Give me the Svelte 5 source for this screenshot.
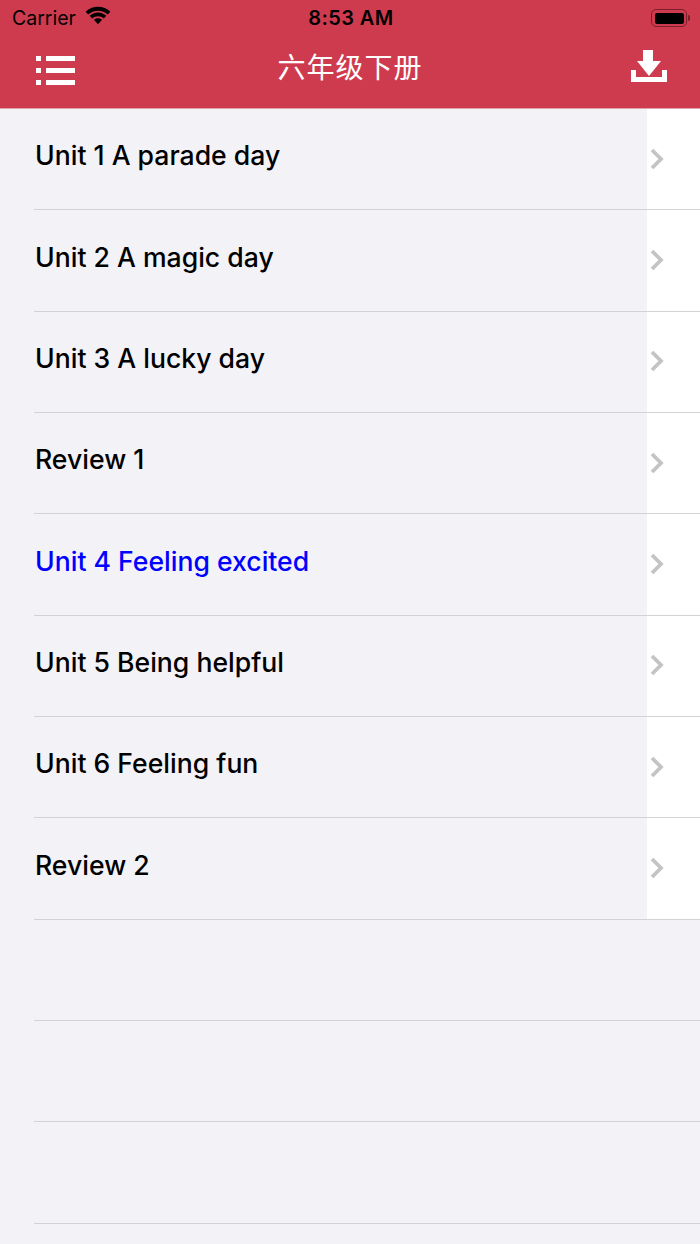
<script>
	const units = [
		{ title: 'Unit 1 A parade day' },
		{ title: 'Unit 2 A magic day' },
		{ title: 'Unit 3 A lucky day' },
		{ title: 'Review 1' },
		{ title: 'Unit 4 Feeling excited', current: true },
		{ title: 'Unit 5 Being helpful' },
		{ title: 'Unit 6 Feeling fun' },
		{ title: 'Review 2' }
	];
</script>

<main class="page">
	<header class="header">
		<div class="status">
			<div class="status-left">
				<span class="carrier">Carrier</span>
				<svg class="wifi" width="28" height="20" viewBox="0 0 26 19">
					<path d="M13 4.400c3.600 0 6.800 1.300 9.300 3.600l2.400-2.600C21.600 2.500 17.500.8 13 .8S4.400 2.500 1.300 5.400L3.700 8C6.200 5.700 9.400 4.400 13 4.400z" fill="#000" />
					<path d="M13 9.700c2.100 0 4 .8 5.500 2.100l2.400-2.600C18.800 7.300 16 6.100 13 6.100S7.200 7.300 5.100 9.200l2.400 2.600C9 10.500 10.900 9.700 13 9.700z" fill="#000" />
					<path d="M13 11.600c-1.500 0-2.800.6-3.900 1.500l3.900 4.300 3.900-4.300c-1.100-.9-2.400-1.500-3.900-1.500z" fill="#000" />
				</svg>
			</div>
			<span class="time">8:53 AM</span>
			<div class="battery">
				<span class="battery-body"><span class="battery-fill"></span></span>
				<span class="battery-cap"></span>
			</div>
		</div>
		<nav class="navbar">
			<svg class="menu-icon" width="40" height="29" viewBox="0 0 40 29">
				<rect x="1" y="0" width="5" height="5" fill="#fff" />
				<rect x="1" y="12" width="5" height="5" fill="#fff" />
				<rect x="1" y="24" width="5" height="5" fill="#fff" />
				<rect x="11" y="0" width="29" height="5" fill="#fff" />
				<rect x="11" y="12" width="29" height="5" fill="#fff" />
				<rect x="11" y="24" width="29" height="5" fill="#fff" />
			</svg>
			<h1 class="title">六年级下册</h1>
			<svg class="download-icon" width="36" height="32" viewBox="0 0 36 32">
				<path d="M12 0h10v11h8L18 26 6 11h6z" fill="#fff" />
				<path d="M0 20h5v7h26v-7h5v12H0z" fill="#fff" />
			</svg>
		</nav>
	</header>

	<ul class="list">
		{#each units as unit}
			<li class="row">
				<div class="cell-main">
					<span class="label" class:current={unit.current}>{unit.title}</span>
				</div>
				<div class="cell-accessory">
					<svg width="14" height="22" viewBox="0 0 14 22">
						<path d="M2 2l9 9-9 9" fill="none" stroke="#c4c4c6" stroke-width="3.800" />
					</svg>
				</div>
			</li>
		{/each}
		<li class="row empty"></li>
		<li class="row empty"></li>
		<li class="row empty"></li>
	</ul>
</main>

<style>
	:global(body) {
		margin: 0;
		background: #f2f2f7;
	}

	.page {
		width: 700px;
		height: 1244px;
		overflow: hidden;
		background: #f2f2f7;
		font-family: Inter, "Liberation Sans", "Noto Sans CJK SC", sans-serif;
	}

	.header {
		height: 109px;
		background: #cf3b4e;
		box-sizing: border-box;
		border-bottom: 1px solid #dfa3ac;
	}

	.status {
		height: 36px;
		display: grid;
		grid-template-columns: 1fr auto 1fr;
		align-items: center;
		padding: 0 10px 0 12px;
		color: #000;
	}

	.status-left {
		display: flex;
		align-items: center;
		gap: 8px;
	}

	.carrier {
		font-size: 19.500px;
		line-height: 36px;
	}

	.wifi {
		margin-top: -4px;
	}

	.time {
		font-size: 20px;
		font-weight: 600;
		letter-spacing: 0.400px;
	}

	.battery {
		justify-self: end;
		display: flex;
		align-items: center;
		gap: 1px;
	}

	.battery-body {
		display: block;
		width: 36px;
		height: 18px;
		box-sizing: border-box;
		padding: 2.500px;
		border: 1.500px solid #7a1f2b;
		border-radius: 5px;
	}

	.battery-fill {
		display: block;
		height: 100%;
		background: #000;
		border-radius: 2px;
	}

	.battery-cap {
		width: 2px;
		height: 6px;
		background: #7a1f2b;
		border-radius: 0 2px 2px 0;
	}

	.navbar {
		height: 63px;
		display: flex;
		align-items: center;
		justify-content: space-between;
		padding: 0 33px 0 35px;
	}

	.menu-icon {
		margin-top: 6px;
	}

	.download-icon {
		margin-top: -3px;
	}

	.title {
		margin: -4px 6px 0 0;
		font-family: "Noto Sans CJK SC", sans-serif;
		font-size: 28px;
		font-weight: 400;
		color: #fff;
		letter-spacing: 1px;
		line-height: 1;
	}

	.list {
		list-style: none;
		margin: 0;
		padding: 0;
	}

	.row {
		position: relative;
		height: 101.330px;
		display: flex;
	}

	.row::after {
		content: '';
		position: absolute;
		left: 34px;
		right: 0;
		bottom: 0;
		height: 1px;
		background: #d3d3d6;
	}

	.cell-main {
		width: 647px;
		display: flex;
		align-items: center;
		padding-left: 35px;
		box-sizing: border-box;
		padding-bottom: 8.500px;
	}

	.label {
		font-size: 26.600px;
		font-weight: 500;
		color: #000;
	}

	.label.current {
		color: #0000ff;
	}

	.cell-accessory {
		flex: 1;
		background: #fff;
		display: flex;
		align-items: center;
		padding-left: 3px;
		padding-bottom: 2px;
	}
</style>
